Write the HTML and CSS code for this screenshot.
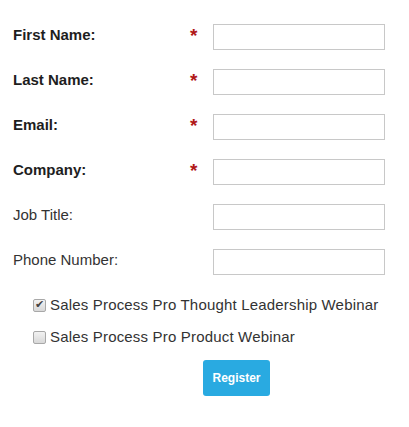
FILE: index.html
```html
<!DOCTYPE html>
<html lang="en">
<head>
    <meta charset="UTF-8">
    <title>Register</title>
    <link rel="stylesheet" href="styles.css">
</head>
<body>
<form class="form">
    <div class="fields">
        <label class="req" for="first">First Name:</label>
        <span class="star">*</span>
        <input type="text" id="first">

        <label class="req" for="last">Last Name:</label>
        <span class="star">*</span>
        <input type="text" id="last">

        <label class="req" for="email">Email:</label>
        <span class="star">*</span>
        <input type="text" id="email">

        <label class="req" for="company">Company:</label>
        <span class="star">*</span>
        <input type="text" id="company">

        <label for="job">Job Title:</label>
        <span class="star"></span>
        <input type="text" id="job">

        <label for="phone">Phone Number:</label>
        <span class="star"></span>
        <input type="text" id="phone">
    </div>
    <div class="checks">
        <label class="check"><input type="checkbox" checked> Sales Process Pro Thought Leadership Webinar</label>
        <label class="check"><input type="checkbox"> Sales Process Pro Product Webinar</label>
    </div>
    <div class="actions">
        <button type="button">Register</button>
    </div>
</form>
</body>
</html>
```

FILE: styles.css
```css
body {
    margin: 0;
    background-color: #fff;
    font-family: "Liberation Sans", Arial, sans-serif;
    color: #333;
}
.form {
    padding: 24px 0 0 13px;
}
.fields {
    display: grid;
    grid-template-columns: 172px 28px 172px;
    row-gap: 19px;
    align-items: center;
}
.fields label {
    font-size: 15px;
    padding-bottom: 5px;
}
.fields .req {
    font-weight: bold;
    color: #1e1e1e;
}
.star {
    color: #b01818;
    font-size: 19px;
    font-weight: bold;
    padding-left: 5px;
    padding-bottom: 2px;
}
.fields input {
    box-sizing: border-box;
    width: 172px;
    height: 26px;
    margin: 0;
    border: 1px solid #c8c8c8;
    border-radius: 0;
}
.checks {
    display: flex;
    flex-direction: column;
    gap: 14px;
    padding: 21px 0 0 20px;
}
.check {
    display: flex;
    align-items: center;
    gap: 4px;
    font-size: 15px;
    line-height: 18px;
    letter-spacing: 0.18px;
    color: #333;
}
.check input {
    appearance: none;
    -webkit-appearance: none;
    position: relative;
    margin: 0;
    width: 13px;
    height: 13px;
    border: 1px solid #a8a8a8;
    border-radius: 2px;
    background: linear-gradient(#f2f2f2, #d8d8d8);
}
.check input:checked::after {
    content: "\2714";
    position: absolute;
    left: 1px;
    top: -2px;
    font-size: 11px;
    color: #444;
}
.actions {
    display: flex;
    padding: 14px 0 0 190px;
}
.actions button {
    width: 67px;
    height: 36px;
    background-color: #29aae1;
    border: none;
    border-radius: 3px;
    color: #fff;
    font-family: "Liberation Sans", Arial, sans-serif;
    font-weight: bold;
    font-size: 12px;
}
```
